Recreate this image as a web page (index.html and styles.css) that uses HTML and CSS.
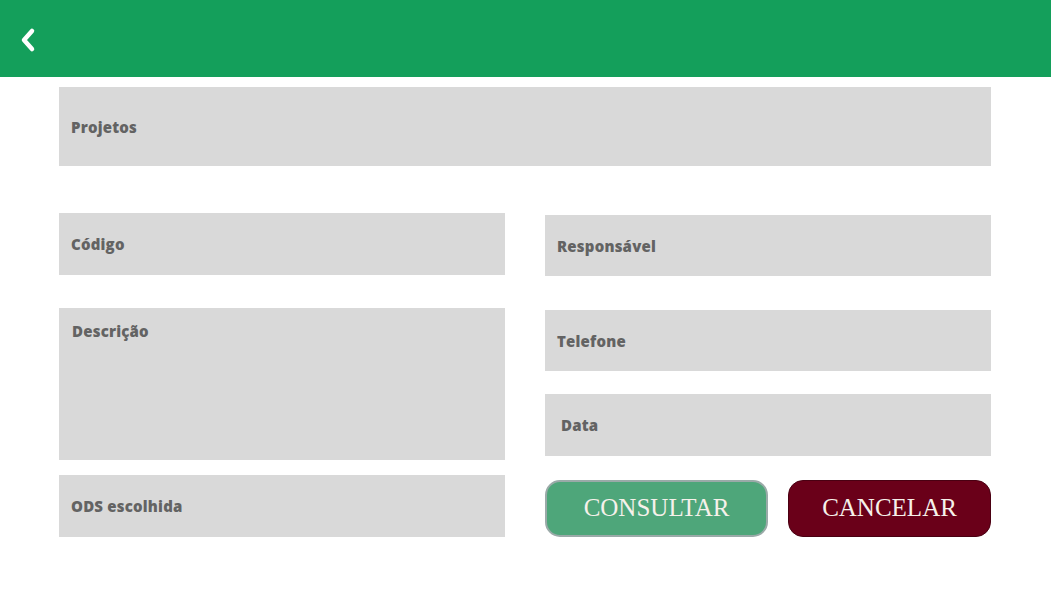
FILE: index.html
```html
<!DOCTYPE html>
<html lang="pt">
<head>
<meta charset="utf-8">
<title>Projetos</title>
<link rel="stylesheet" href="styles.css">
</head>
<body>
<header class="topbar">
  <button class="back" aria-label="Voltar">
    <svg width="18" height="26" viewBox="0 0 18 26"><path d="M13 4 L5 13 L13 22" fill="none" stroke="#fff" stroke-width="4.5" stroke-linecap="round" stroke-linejoin="round"/></svg>
  </button>
</header>
<main class="content">
  <div class="field projetos"><span>Projetos</span></div>
  <div class="grid">
    <div class="col left">
      <div class="field codigo"><span>Código</span></div>
      <div class="field descricao"><span>Descrição</span></div>
      <div class="field ods"><span>ODS escolhida</span></div>
    </div>
    <div class="col right">
      <div class="field responsavel"><span>Responsável</span></div>
      <div class="field telefone"><span>Telefone</span></div>
      <div class="field data"><span>Data</span></div>
      <div class="buttons">
        <button class="btn consultar">CONSULTAR</button>
        <button class="btn cancelar">CANCELAR</button>
      </div>
    </div>
  </div>
</main>
</body>
</html>
```
FILE: styles.css
```css
html, body {
  margin: 0;
  padding: 0;
  background: #fff;
}
body {
  font-family: "Open Sans", "Liberation Sans", sans-serif;
}
.topbar {
  height: 77px;
  background: #149f5b;
  display: flex;
  align-items: center;
}
.back {
  background: none;
  border: 0;
  padding: 0;
  margin-left: 19px;
  margin-top: 2px;
  display: flex;
  cursor: pointer;
}
.content {
  padding: 10px 60px 0 59px;
}
.field {
  background: #d9d9d9;
  display: flex;
  align-items: center;
  padding-left: 12px;
  box-sizing: border-box;
}
.field span {
  font-weight: 800;
  font-size: 15px;
  color: #636363;
  letter-spacing: 0.2px;
}
.projetos {
  height: 79px;
}
.grid {
  display: grid;
  grid-template-columns: 446px 446px;
  column-gap: 40px;
  margin-top: 47px;
}
.col {
  display: flex;
  flex-direction: column;
}
.codigo { height: 62px; }
.descricao {
  height: 152px;
  margin-top: 33px;
  align-items: flex-start;
  padding-left: 13px;
  padding-top: 13px;
}
.ods { height: 62px; margin-top: 15px; }
.right { padding-top: 2px; }
.responsavel { height: 61px; }
.telefone { height: 61px; margin-top: 34px; }
.data { height: 62px; margin-top: 23px; padding-left: 16px; }
.buttons {
  display: flex;
  gap: 20px;
  margin-top: 24px;
}
.btn {
  height: 57px;
  border-radius: 15px;
  font-family: "Liberation Serif", serif;
  font-size: 25px;
  color: #f6f1ea;
  box-sizing: border-box;
  padding: 0 0 2px;
  cursor: pointer;
}
.consultar {
  width: 223px;
  background: #4ea67a;
  border: 2px solid #9aaaa8;
}
.cancelar {
  width: 203px;
  background: #6a0019;
  border: 1px solid #4a0012;
}
```
